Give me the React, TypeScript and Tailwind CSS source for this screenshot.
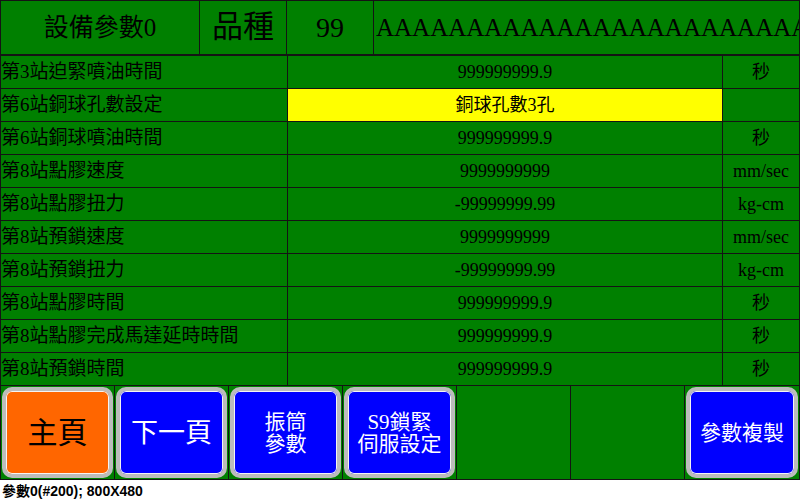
import React from "react";

const F = { fontFamily: '"Liberation Serif", "Noto Sans CJK TC", serif' };

const rows: { label: string; value: string; unit: string; yellow?: boolean }[] = [
  { label: "第3站迫緊噴油時間", value: "999999999.9", unit: "秒" },
  { label: "第6站銅球孔數設定", value: "銅球孔數3孔", unit: "", yellow: true },
  { label: "第6站銅球噴油時間", value: "999999999.9", unit: "秒" },
  { label: "第8站點膠速度", value: "9999999999", unit: "mm/sec" },
  { label: "第8站點膠扭力", value: "-99999999.99", unit: "kg-cm" },
  { label: "第8站預鎖速度", value: "9999999999", unit: "mm/sec" },
  { label: "第8站預鎖扭力", value: "-99999999.99", unit: "kg-cm" },
  { label: "第8站點膠時間", value: "999999999.9", unit: "秒" },
  { label: "第8站點膠完成馬達延時時間", value: "999999999.9", unit: "秒" },
  { label: "第8站預鎖時間", value: "999999999.9", unit: "秒" },
];

function Btn({ children, orange }: { children?: React.ReactNode; orange?: boolean }) {
  return (
    <div
      className={
        "h-full w-full rounded-[10px] border-[4px] border-[#bcbcbc] shadow-[inset_0_0_0_1px_#f4f4f4] flex items-center justify-center text-center leading-[22px] " +
        (orange ? "bg-[#ff6600] text-black" : "bg-[#0000ff] text-white")
      }
    >
      {children}
    </div>
  );
}

export default function App() {
  return (
    <div className="w-[800px] h-[502px] bg-white overflow-hidden" style={F}>
      <div className="h-[480px] bg-[#008000] border border-[#141414] flex flex-col text-black">
        {/* header */}
        <div className="h-[55px] flex border-b-2 border-[#141414] shrink-0">
          <div className="w-[199px] border-r border-[#141414] flex items-center justify-center text-[25px]">
            設備參數0
          </div>
          <div className="w-[87px] border-r border-[#141414] flex items-center justify-center text-[31px]">
            品種
          </div>
          <div className="w-[87px] border-r border-[#141414] flex items-center justify-center text-[28px]">
            99
          </div>
          <div className="flex-1 overflow-hidden whitespace-nowrap flex items-center pl-[2px] text-[25px]">
            AAAAAAAAAAAAAAAAAAAAAAAAAAAAAAAAAA
          </div>
        </div>
        {/* rows */}
        {rows.map((r, i) => (
          <div key={i} className="h-[33px] flex border-b border-[#141414] shrink-0">
            <div className="w-[287px] border-r border-[#141414] flex items-center text-[19px] whitespace-nowrap">
              {r.label}
            </div>
            <div
              className={
                "w-[435px] border-r border-[#141414] flex items-center justify-center text-[18px] " +
                (r.yellow ? "bg-[#ffff00]" : "")
              }
            >
              {r.value}
            </div>
            <div className="flex-1 flex items-center justify-center text-[18px]">{r.unit}</div>
          </div>
        ))}
        {/* buttons */}
        <div className="flex-1 flex">
          {[0, 1, 2, 3, 4, 5, 6].map((i) => (
            <div
              key={i}
              className={
                "w-[114px] p-[1px] " + (i < 6 ? "border-r border-[#141414]" : "flex-1")
              }
            >
              {i === 0 && (
                <Btn orange>
                  <span className="text-[30px]">主頁</span>
                </Btn>
              )}
              {i === 1 && (
                <Btn>
                  <span className="text-[27px]">下一頁</span>
                </Btn>
              )}
              {i === 2 && (
                <Btn>
                  <span className="text-[21px]">
                    振筒
                    <br />
                    參數
                  </span>
                </Btn>
              )}
              {i === 3 && (
                <Btn>
                  <span className="text-[21px]">
                    S9鎖緊
                    <br />
                    伺服設定
                  </span>
                </Btn>
              )}
              {i === 6 && (
                <Btn>
                  <span className="text-[21px]">參數複製</span>
                </Btn>
              )}
            </div>
          ))}
        </div>
      </div>
      <div
        className="h-[22px] pl-[2px] flex items-center text-[14px] font-bold text-black"
        style={{ fontFamily: '"Liberation Sans", "Noto Sans CJK TC", sans-serif' }}
      >
        參數0(#200); 800X480
      </div>
    </div>
  );
}
